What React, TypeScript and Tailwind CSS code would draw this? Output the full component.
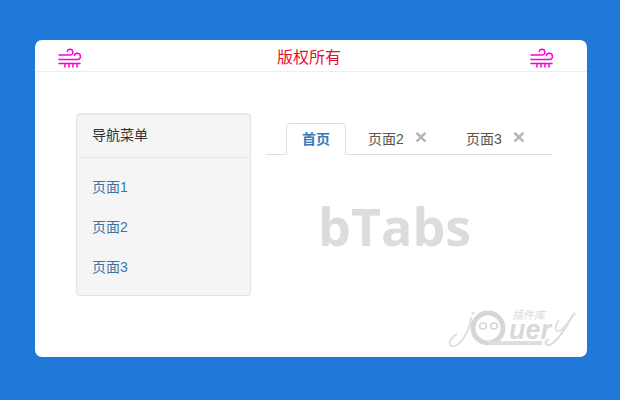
const cjk = "font-['Liberation_Sans','Noto_Sans_CJK_SC',sans-serif]";

function WindIcon() {
  return (
    <svg width="24" height="21" viewBox="0 0 24 21" fill="none" stroke="#fb00d4" strokeWidth="1.5" strokeLinecap="round">
      <path d="M1 7H12.5C15.5 7 15.8 1.5 12 1.3C10.5 1.3 9.5 2.2 9.3 3.4" />
      <path d="M1 11.5H19.5C23.5 11.5 23.5 5.2 19.2 5.2C17.5 5.2 16.5 6.2 16.3 7.4" />
      <path d="M1 15.5H22" />
      <path d="M7 15.5V19M11 15.5V19M15 15.5V19M19 15.5V19" />
    </svg>
  );
}

function Watermark() {
  return (
    <div className="absolute left-[412px] top-[265px] w-[130px] h-[46px] text-[#d9d9d9]">
      <svg className="absolute left-0 top-0" width="130" height="46" viewBox="0 0 130 46" fill="none">
        <path d="M24 12C24 22 16 38 8 41C1 43 0 35 10 29" stroke="#dcdcdc" strokeWidth="1.8" />
        <circle cx="26" cy="8" r="1.6" fill="#dcdcdc" />
        <circle cx="41" cy="23" r="15" stroke="#d6d6d6" strokeWidth="5" />
        <ellipse cx="36" cy="21" rx="3.4" ry="3" stroke="#d6d6d6" strokeWidth="1.6" />
        <ellipse cx="47" cy="21" rx="3.4" ry="3" stroke="#d6d6d6" strokeWidth="1.6" />
        <path d="M128 8C122 14 118 28 106 38C100 43 95 38 102 34" stroke="#dcdcdc" strokeWidth="2" />
        <path d="M112 15C108 20 107 27 112 26C117 25 122 15 128 8" stroke="#dcdcdc" strokeWidth="1.6" />
        <rect x="41" y="36" width="54" height="4" fill="#dedede" />
      </svg>
      <span className={`absolute left-[65px] top-[4px] text-[11px] leading-[12px] italic ${cjk}`}>插件库</span>
      <span className="absolute left-[62px] top-[16px] text-[27px] leading-[19px] font-bold italic font-['Liberation_Sans',sans-serif]">uer</span>
    </div>
  );
}

function Tab({ label }: { label: string }) {
  return (
    <div className="w-[98px] h-[32px] pl-[22px] flex items-center text-[14px] text-[#555555]">
      <span>{label}</span>
      <span className="ml-[11px] -mt-[5px] text-[21px] leading-[20px] font-bold text-[#b4b4b4] font-['Liberation_Sans',sans-serif]">×</span>
    </div>
  );
}

export default function App() {
  return (
    <div className={`w-[620px] h-[400px] bg-[#2079d9] pt-[40px] pl-[35px] ${cjk}`}>
      <div className="relative w-[552px] h-[317px] bg-white rounded-[7px] overflow-hidden">
        <header className="h-[32px] border-b border-[#eeeeee] flex justify-between pl-[23px] pr-[33px] pt-[8px]">
          <WindIcon />
          <span className="text-[16px] leading-[18px] text-[#e3102f] translate-x-[3px] translate-y-[1px]">版权所有</span>
          <WindIcon />
        </header>
        <div className="flex pl-[41px] pt-[41px]">
          <aside className="w-[175px] h-[183px] bg-[#f5f5f5] border border-[#e3e3e3] rounded-[4px] text-[14px] shrink-0 shadow-[inset_0_1px_1px_rgba(0,0,0,0.05)]">
            <div className="h-[44px] border-b border-[#e7e7e7] pl-[15px] flex items-center text-[#333333]">导航菜单</div>
            <nav className="flex flex-col pl-[15px] pt-[9px] text-[#3a77a8]">
              <a className="h-[40px] flex items-center">页面1</a>
              <a className="h-[40px] flex items-center">页面2</a>
              <a className="h-[40px] flex items-center">页面3</a>
            </nav>
          </aside>
          <main className="ml-[15px] w-[286px]">
            <div className="flex pl-[20px] pt-[10px] h-[42px] border-b border-[#dddddd]">
              <div className="w-[60px] h-[32px] bg-white border border-[#dddddd] border-b-white rounded-t-[4px] flex items-center justify-center text-[14px] font-bold text-[#337ab7]">首页</div>
              <Tab label="页面2" />
              <Tab label="页面3" />
            </div>
            <div className="h-[100px] pl-[52px] pt-[25px] text-[52px] leading-[92px] font-bold text-[#dcdcdc] font-['Open_Sans',sans-serif]">bTabs</div>
          </main>
        </div>
        <Watermark />
      </div>
    </div>
  );
}
